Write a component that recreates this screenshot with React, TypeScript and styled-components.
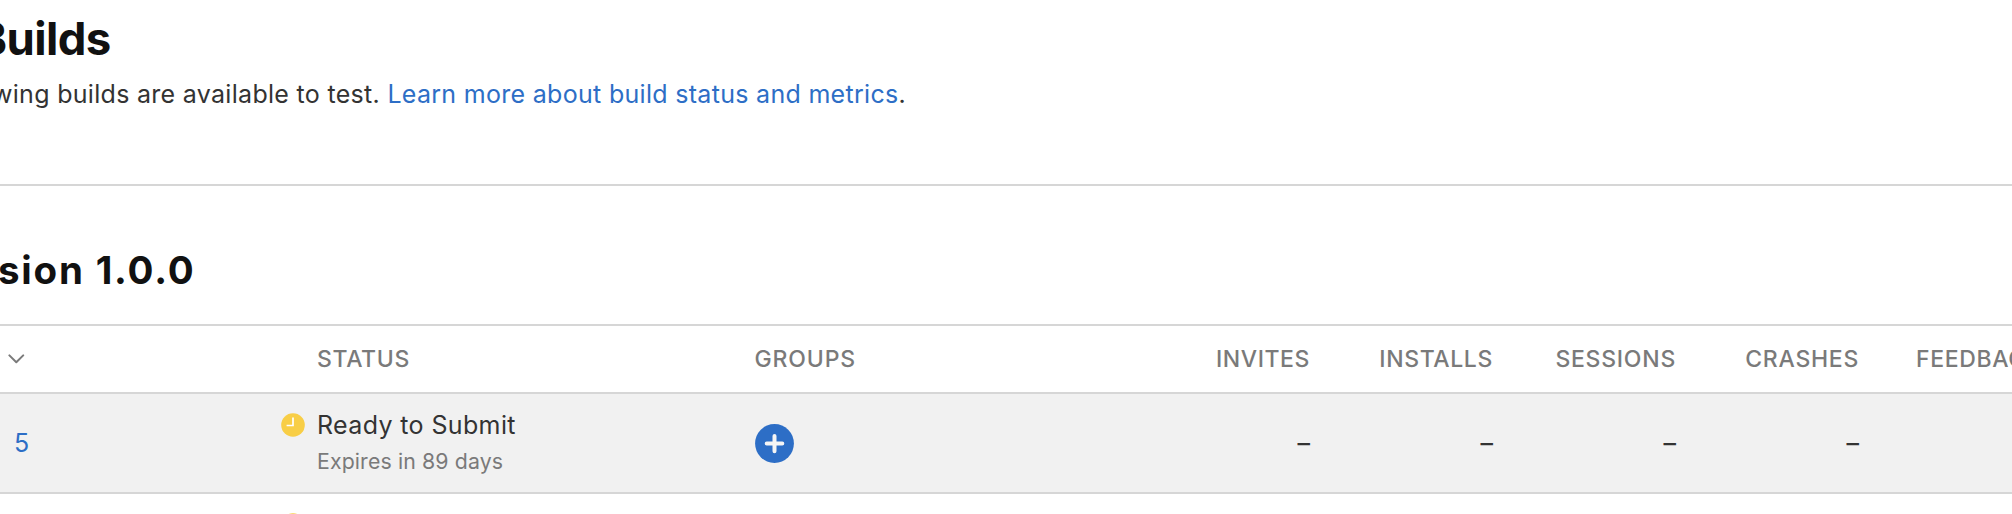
import React from "react";
import styled, { createGlobalStyle } from "styled-components";

const GlobalStyle = createGlobalStyle`
  * { box-sizing: border-box; }
  html, body { margin: 0; padding: 0; background: #fff; overflow: hidden; }
  body { font-family: Inter, "Liberation Sans", sans-serif; color: #333; }
`;

const Page = styled.main`
  width: 2012px;
  height: 514px;
  overflow: hidden;
  background: #fff;
  white-space: nowrap;
`;

const Header = styled.header`
  height: 186px;
  padding-top: 11px;
  border-bottom: 2px solid #d6d6d6;
`;

const Title = styled.h1`
  margin: 0 0 10px -23px;
  font-size: 45.5px;
  line-height: 56px;
  font-weight: 700;
  letter-spacing: -0.6px;
  color: #111;
`;

const Intro = styled.p`
  margin: 0 0 0 -8px;
  font-size: 25px;
  line-height: 34px;
  letter-spacing: 0.3px;
`;

const Link = styled.a`
  color: #2d6ec6;
  text-decoration: none;
`;

const VersionTitle = styled.h2`
  margin: 60px 0 30px -2px;
  font-size: 38.5px;
  line-height: 48px;
  font-weight: 700;
  letter-spacing: 1.8px;
  color: #111;
`;

const Row = styled.div<{ $height: number; $shaded?: boolean }>`
  display: grid;
  grid-template-columns: 281px 473.5px 372.5px repeat(5, 183px);
  height: ${(p) => p.$height}px;
  background: ${(p) => (p.$shaded ? "#f1f1f1" : "#fff")};
  border-bottom: 2px solid #d6d6d6;
`;

const HeadRow = styled(Row)`
  border-top: 2px solid #d6d6d6;
  color: #7a7a7a;
  font-size: 23px;
  font-weight: 500;
`;

const Cell = styled.div<{ $inset?: number; $end?: boolean }>`
  display: flex;
  align-items: center;
  min-width: 0;
  padding-left: ${(p) => p.$inset ?? 0}px;
  justify-content: ${(p) => (p.$end ? "flex-end" : "flex-start")};
`;

const Label = styled.span<{ $tracking: number }>`
  letter-spacing: ${(p) => p.$tracking}px;
`;

const BuildLink = styled(Link)`
  font-size: 25px;
`;

const StatusCell = styled.div`
  display: flex;
  align-items: flex-start;
  gap: 12px;
  padding-top: 14px;
`;

const ClockIcon = styled.svg`
  flex: none;
  display: block;
  width: 24px;
  height: 24px;
  margin-top: 5px;
`;

const StatusText = styled.div`
  display: flex;
  flex-direction: column;
  gap: 4px;
`;

const StatusName = styled.span`
  font-size: 25px;
  line-height: 34px;
  letter-spacing: 0.37px;
`;

const StatusNote = styled.span`
  font-size: 21.3px;
  line-height: 30px;
  letter-spacing: 0.12px;
  color: #7a7a7a;
`;

const AddButton = styled.button`
  display: flex;
  padding: 0;
  border: 0;
  background: none;
`;

const Value = styled.span`
  font-size: 25px;
  font-weight: 500;
`;

const metrics = [
  { name: "INVITES", tracking: 0.58 },
  { name: "INSTALLS", tracking: 0.63 },
  { name: "SESSIONS", tracking: 0.75 },
  { name: "CRASHES", tracking: 0.72 },
];

const Clock = () => (
  <ClockIcon viewBox="0 0 24 24">
    <circle cx="12" cy="12" r="11.8" fill="#f8ce46" />
    <path d="M12 4.6v7.9H5.6" fill="none" stroke="#fff" strokeWidth="1.7" />
  </ClockIcon>
);

export default function App() {
  return (
    <Page>
      <GlobalStyle />
      <Header>
        <Title>Builds</Title>
        <Intro>
          wing builds are available to test.{" "}
          <Link>Learn more about build status and metrics</Link>.
        </Intro>
      </Header>
      <VersionTitle>sion 1.0.0</VersionTitle>
      <HeadRow $height={70}>
        <Cell $inset={8}>
          <svg width="17" height="10" viewBox="0 0 17 10">
            <path
              d="M1.4 1.4 8.3 8.3 15.2 1.4"
              fill="none"
              stroke="#7a7a7a"
              strokeWidth="2"
              strokeLinecap="round"
              strokeLinejoin="round"
            />
          </svg>
        </Cell>
        <Cell $inset={36}>
          <Label $tracking={0.63}>STATUS</Label>
        </Cell>
        <Cell>
          <Label $tracking={0.85}>GROUPS</Label>
        </Cell>
        {metrics.map((m) => (
          <Cell key={m.name} $end>
            <Label $tracking={m.tracking}>{m.name}</Label>
          </Cell>
        ))}
        <Cell $inset={57}>
          <Label $tracking={0.65}>FEEDBACK</Label>
        </Cell>
      </HeadRow>
      <Row $height={100} $shaded>
        <Cell $inset={14}>
          <BuildLink>5</BuildLink>
        </Cell>
        <StatusCell>
          <Clock />
          <StatusText>
            <StatusName>Ready to Submit</StatusName>
            <StatusNote>Expires in 89 days</StatusNote>
          </StatusText>
        </StatusCell>
        <Cell>
          <AddButton aria-label="Add group">
            <svg width="39" height="39" viewBox="0 0 39 39">
              <circle cx="19.5" cy="19.5" r="19.4" fill="#2d6ec6" />
              <path
                d="M19.5 12v15.2M11.7 19.6h15.6"
                stroke="#f5f5f5"
                strokeWidth="4"
                strokeLinecap="round"
              />
            </svg>
          </AddButton>
        </Cell>
        {metrics.map((m) => (
          <Cell key={m.name} $end>
            <Value>–</Value>
          </Cell>
        ))}
      </Row>
      <Row $height={100}>
        <Cell />
        <StatusCell>
          <Clock />
        </StatusCell>
      </Row>
    </Page>
  );
}
